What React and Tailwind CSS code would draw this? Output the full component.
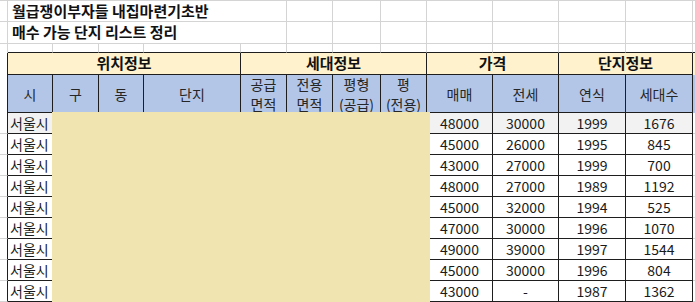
import React from "react";

const W = [8, 45, 46, 45, 97, 46, 46, 48, 46, 66, 66, 67, 67, 2];
const GREY = "border-[#d4d4d4]";
const DARK = "border-[#1e1e1e]";

const data = [
  ["48000", "30000", "1999", "1676"],
  ["45000", "26000", "1995", "845"],
  ["43000", "27000", "1999", "700"],
  ["48000", "27000", "1989", "1192"],
  ["45000", "32000", "1994", "525"],
  ["47000", "30000", "1996", "1070"],
  ["49000", "39000", "1997", "1544"],
  ["45000", "30000", "1996", "804"],
  ["43000", "-", "1987", "1362"],
];

function Cell({ w, className = "", children }) {
  return (
    <div
      className={"shrink-0 flex items-center justify-center overflow-visible whitespace-nowrap " + className}
      style={{ width: w }}
    >
      {children}
    </div>
  );
}

function TitleRow({ h, text }) {
  return (
    <div className={"flex " + (h === 21 ? "h-[21px]" : "h-[22px]")}>
      <Cell w={8} className={"border-r border-b " + GREY} />
      <div
        className={"shrink-0 w-[279px] border-r border-b flex items-center pl-[4px] text-[15px] font-bold text-[#111] " + GREY}
      >
        {text}
      </div>
      {W.slice(6).map((w, i) => (
        <Cell key={i} w={w} className={"border-b " + (i < 7 ? "border-r " : "") + GREY} />
      ))}
    </div>
  );
}

export default function App() {
  return (
    <div
      className="relative w-[695px] h-[302px] overflow-hidden bg-white text-[#1a1a1a]"
      style={{ fontFamily: '"Noto Sans CJK KR", "Noto Sans", sans-serif' }}
    >
      <div className={"h-px border-t " + GREY} />
      <TitleRow h={21} text="월급쟁이부자들 내집마련기초반" />
      <TitleRow h={22} text="매수 가능 단지 리스트 정리" />
      {/* spacer row */}
      <div className="flex h-[9px]">
        <Cell w={8} className={"border-r " + GREY} />
        {W.slice(1).map((w, i) => (
          <Cell
            key={i}
            w={w}
            className={(i < 12 ? "border-r " + GREY + " " : "") + "border-b-[1.5px] border-b-[#1e1e1e]"}
          />
        ))}
      </div>
      {/* header row 1 */}
      <div className="flex h-[22px] text-[15px] font-bold text-[#111]">
        <Cell w={8} className={"border-r " + DARK} />
        <Cell w={233} className={"bg-[#fff2cc] border-r border-b " + DARK}>위치정보</Cell>
        <Cell w={186} className={"bg-[#fff2cc] border-r border-b " + DARK}>세대정보</Cell>
        <Cell w={132} className={"bg-[#fff2cc] border-r border-b " + DARK}>가격</Cell>
        <Cell w={134} className={"bg-[#fff2cc] border-r border-b " + DARK}>단지정보</Cell>
        <Cell w={2} className="bg-[#fff2cc]" />
      </div>
      {/* header row 2 */}
      <div className="flex h-[38px] text-[14px] text-[#262626] leading-[20px]">
        <Cell w={8} className={"border-r " + DARK} />
        {[
          "시",
          "구",
          "동",
          "단지",
          ["공급", "면적"],
          ["전용", "면적"],
          ["평형", "(공급)"],
          ["평", "(전용)"],
          "매매",
          "전세",
          "연식",
          "세대수",
        ].map((t, i) => (
          <Cell key={i} w={W[i + 1]} className={"bg-[#b4c6e7] border-r border-b flex-col " + DARK}>
            {Array.isArray(t) ? (
              <>
                <span>{t[0]}</span>
                <span>{t[1]}</span>
              </>
            ) : (
              t
            )}
          </Cell>
        ))}
        <Cell w={2} className="bg-[#b4c6e7]" />
      </div>
      {/* data rows */}
      {data.map((r, ri) => (
        <div key={ri} className="flex h-[21px] text-[14px] text-[#1a1a1a]">
          <Cell w={8} className={"border-r border-b " + (ri === 0 ? "border-[#1e1e1e] border-b-[#d4d4d4]" : "border-r-[#1e1e1e] border-b-[#d4d4d4]")} />
          <Cell w={45} className={"border-r border-b justify-start pl-[2px] " + DARK + (ri === 0 ? " bg-[#f2f2f2]" : "")}>
            서울시
          </Cell>
          {W.slice(2, 9).map((w, i) => (
            <Cell key={i} w={w} className={"border-r border-b " + DARK} />
          ))}
          {r.map((v, i) => (
            <Cell
              key={"v" + i}
              w={W[9 + i]}
              className={"border-r border-b " + DARK + (ri === 0 ? " bg-[#f2f2f2]" : "")}
            >
              {v}
            </Cell>
          ))}
          <Cell w={2} className={"border-b " + GREY} />
        </div>
      ))}
      {/* redaction overlay */}
      <div className="absolute left-[52px] top-[112px] w-[378px] h-[200px] bg-[#f0e4b0]" />
    </div>
  );
}
